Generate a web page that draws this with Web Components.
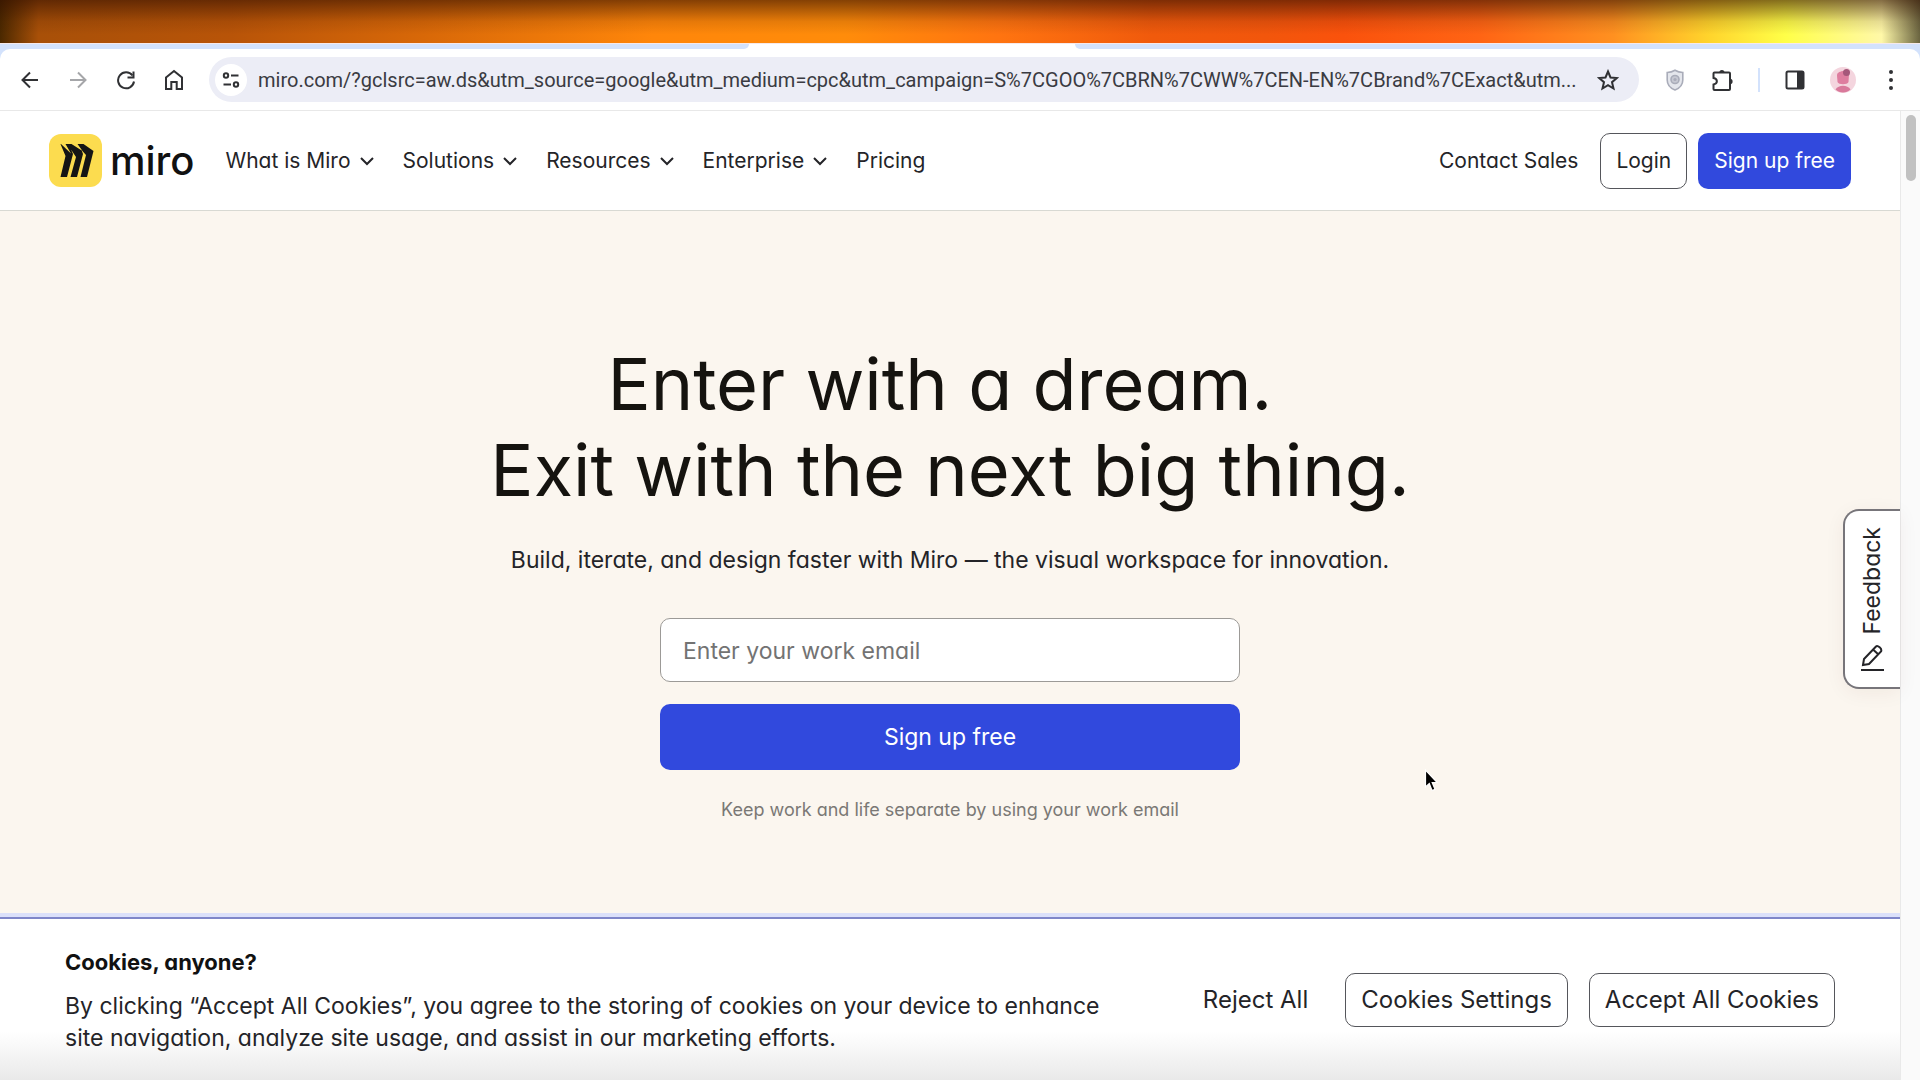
<!DOCTYPE html>
<html lang="en">
<head>
<meta charset="utf-8">
<meta name="viewport" content="width=device-width, initial-scale=1">
<title>Miro</title>
<style>
  body {
    margin: 0;
    font-family: Inter, "Liberation Sans", sans-serif;
    font-feature-settings: "cv11";
    color: #242428;
  }
</style>
</head>
<body>
<browser-window>
  <browser-toolbar slot="toolbar"></browser-toolbar>
  <site-header>
    <nav-item menu>What is Miro</nav-item>
    <nav-item menu>Solutions</nav-item>
    <nav-item menu>Resources</nav-item>
    <nav-item menu>Enterprise</nav-item>
    <nav-item>Pricing</nav-item>
    <nav-item slot="actions">Contact Sales</nav-item>
    <action-button slot="actions" kind="outline">Login</action-button>
    <action-button slot="actions" kind="primary">Sign up free</action-button>
  </site-header>
  <hero-section>
    <span slot="title">Enter with a dream.&nbsp;<br>Exit with the next big thing.</span>
    <span slot="lead">Build, iterate, and design faster with Miro — the visual workspace for innovation.</span>
    <span slot="note">Keep work and life separate by using your work email</span>
  </hero-section>
  <cookie-banner>
    <span slot="title">Cookies, anyone?</span>
    By clicking “Accept All Cookies”, you agree to the storing of cookies on your device to enhance site navigation, analyze site usage, and assist in our marketing efforts.
    <action-button slot="actions" kind="plain">Reject All</action-button>
    <action-button slot="actions" kind="outline">Cookies Settings</action-button>
    <action-button slot="actions" kind="outline">Accept All Cookies</action-button>
  </cookie-banner>
  <feedback-tab slot="overlay">Feedback</feedback-tab>
  <mouse-pointer slot="overlay"></mouse-pointer>
</browser-window>

<script>
function define(name, html, setup) {
  const template = document.createElement("template");
  template.innerHTML = html;

  customElements.define(name, class extends HTMLElement {
    constructor() {
      super();
      this.attachShadow({ mode: "open" });
      this.shadowRoot.append(template.content.cloneNode(true));
    }

    connectedCallback() {
      if (setup) setup(this, this.shadowRoot);
    }
  });
}

// window frame: wallpaper strip, tab edge, toolbar, then page + scrollbar
define("browser-window", `
<style>
  :host {
    display: flex;
    flex-direction: column;
    min-height: 100vh;
    background: #fff;
  }
  .wallpaper {
    height: 43px;
    background:
      linear-gradient(180deg, rgba(50, 15, 0, .6), rgba(50, 15, 0, .12) 50%, transparent 80%),
      linear-gradient(90deg, #4a2800 0, #a85008 2%, #b85408 12%, #d86808 22%, #ff860a 34%, #ff8c0a 44%, #ff7410 52%, #f05a0c 60%, #f2560c 66%, #fa520c 70%, #ff6414 77%, #ff9020 84%, #ffd42c 89%, #ffff48 93%, #fff8a8 98%, #6a6440 100%);
  }
  .tabs {
    display: flex;
    height: 6px;
    background: #fff;
    border-top: 1px solid #f6e9ea;
    box-sizing: border-box;
  }
  .tabs i { background: #d3e2fc; }
  .tabs i:first-child { flex: 0 0 39%; border-radius: 0 0 6px 0; }
  .tabs i:last-child { flex: 0 0 44%; margin-left: auto; border-radius: 0 0 0 6px; }
  .bar { background: #d3e2fc; }
  .body { flex: 1; display: flex; }
  main { position: relative; flex: 1; min-width: 0; display: flex; flex-direction: column; }
  aside {
    flex: 0 0 19px;
    background: #fafafa;
    border-left: 1px solid #e9e9e9;
    display: flex;
    justify-content: center;
    align-items: flex-start;
  }
  aside div { width: 10px; height: 66px; margin-top: 4px; border-radius: 5px; background: #c1c1c1; }
</style>
<div class="wallpaper"></div>
<div class="tabs"><i></i><i></i></div>
<div class="bar"><slot name="toolbar"></slot></div>
<div class="body">
  <main><slot></slot><slot name="overlay"></slot></main>
  <aside><div></div></aside>
</div>
`);

define("icon-button", `
<style>
  :host { display: inline-flex; }
  button {
    display: grid;
    place-items: center;
    width: 32px;
    height: 32px;
    padding: 0;
    border: 0;
    border-radius: 50%;
    background: none;
    color: inherit;
  }
</style>
<button type="button"><slot></slot></button>
`, (el, root) => {
  root.querySelector("button").setAttribute("aria-label", el.getAttribute("label"));
});

define("browser-toolbar", `
<style>
  :host {
    display: flex;
    align-items: center;
    height: 61px;
    padding: 0 13px 0 14px;
    border-bottom: 1px solid #e8e8e8;
    border-radius: 10px 10px 0 0;
    background: #fff;
    color: #303134;
  }
  svg { display: block; fill: none; stroke: currentColor; stroke-width: 2; }
  .nav { display: flex; gap: 16px; margin-right: 19px; }
  .off { color: #a5a6a9; }
  .omnibox {
    flex: 1;
    display: flex;
    align-items: center;
    gap: 11px;
    height: 45px;
    padding: 0 15px 0 6px;
    border-radius: 23px;
    background: #ecedf6;
  }
  .site { border-radius: 50%; background: #fff; }
  input {
    flex: 1;
    min-width: 0;
    padding: 0;
    border: 0;
    outline: 0;
    background: none;
    font: 20px Roboto, sans-serif;
    color: #3a3b42;
    text-overflow: ellipsis;
  }
  .ext { display: flex; align-items: center; gap: 16px; margin-left: 20px; }
  .sep { width: 2px; height: 24px; margin: 0 3px; background: #d3e2fc; }
</style>
<div class="nav">
  <icon-button label="Back"><svg width="18" height="18" viewBox="0 0 18 18"><path d="M17 9H2M9 1.500L1.500 9L9 16.500"/></svg></icon-button>
  <icon-button class="off" label="Forward"><svg width="18" height="18" viewBox="0 0 18 18"><path d="M1 9h15M9 1.500L16.500 9L9 16.500"/></svg></icon-button>
  <icon-button label="Reload"><svg width="20" height="20" viewBox="0 0 20 20"><path d="M16.500 5.500A8 8 0 1 0 18 11.500"/><path d="M17.500 1.500v6h-6"/></svg></icon-button>
  <icon-button label="Home"><svg width="20" height="22" viewBox="0 0 20 22"><path d="M2 8.500L10 2l8 6.500V20h-5.300v-7H7.300v7H2z"/></svg></icon-button>
</div>
<div class="omnibox">
  <icon-button class="site" label="Site information"><svg width="18" height="18" viewBox="0 0 18 18"><circle cx="4" cy="4.500" r="2.200"/><path d="M9 4.500h7.500M1.500 13.500H9"/><circle cx="14" cy="13.500" r="2.200"/></svg></icon-button>
  <input aria-label="Address" spellcheck="false" value="miro.com/?gclsrc=aw.ds&amp;utm_source=google&amp;utm_medium=cpc&amp;utm_campaign=S%7CGOO%7CBRN%7CWW%7CEN-EN%7CBrand%7CExact&amp;utm...">
  <icon-button label="Bookmark"><svg width="22" height="22" viewBox="0 0 22 22"><path d="M11 2.500l2.500 6 6.300.5-4.800 4.200 1.500 6.300L11 16.100 5.500 19.500 7 13.200 2.200 9l6.300-.5z"/></svg></icon-button>
</div>
<div class="ext">
  <icon-button label="Shield"><svg width="18" height="22" viewBox="0 0 18 22"><path d="M9 1.200c2.500 1.500 5 2.200 7.800 2.300V11c0 5-4 8.500-7.800 10C5.200 19.500 1.200 16 1.200 11V3.500C4 3.400 6.500 2.700 9 1.200z" fill="#e4e6ec" stroke="#a9acb9" stroke-width="1.600"/><circle cx="9" cy="10.500" r="4" stroke="#a9acb9" stroke-width="1.600" fill="#c6c8d2"/><circle cx="9" cy="10.500" r="1.600" fill="#a9acb9" stroke="none"/></svg></icon-button>
  <icon-button label="Extensions"><svg width="24" height="24" viewBox="0 0 24 24"><path d="M2.500 5.500a1 1 0 0 1 1-1h14.500a1 1 0 0 1 1 1V21a1 1 0 0 1-1 1H3.500a1 1 0 0 1-1-1v-4.500c4.500-1 4.500-5.500 0-6.500z"/><path d="M8.300 4.500a2.600 2.600 0 0 1 5.200 0zM19 10.800a2.600 2.600 0 0 1 0 5.200z" fill="currentColor" stroke="none"/></svg></icon-button>
  <div class="sep"></div>
  <icon-button label="Side panel"><svg width="20" height="20" viewBox="0 0 20 20"><rect x="1.500" y="1.500" width="17" height="17" rx="1.500"/><path d="M12 1.500h6.500v17H12z" fill="currentColor" stroke="none"/></svg></icon-button>
  <icon-button label="Profile"><svg width="28" height="28" viewBox="0 0 28 28" stroke="none"><circle cx="14" cy="14" r="13" fill="#f4d5de" stroke="none"/><path d="M8 9c0-4 11-6 12-1l-.5 8c-1 3-10 3-11 0z" fill="#de7d9f" stroke="none"/><circle cx="17.500" cy="6.500" r="3.500" fill="#a5577a" stroke="none"/><path d="M6.500 23.500c3-5 12-5 15 0-4 4-11 4-15 0z" fill="#d9799b" stroke="none"/></svg></icon-button>
  <icon-button label="Menu"><svg width="6" height="22" viewBox="0 0 6 22"><g fill="currentColor" stroke="none"><circle cx="3" cy="3" r="2"/><circle cx="3" cy="11" r="2"/><circle cx="3" cy="19" r="2"/></g></svg></icon-button>
</div>
`);

define("nav-item", `
<style>
  :host { display: block; }
  a {
    display: flex;
    align-items: center;
    gap: 8px;
    font-size: 21px;
    line-height: 28px;
    color: inherit;
    text-decoration: none;
    white-space: nowrap;
  }
  svg { display: none; fill: none; stroke: currentColor; stroke-width: 2; }
  :host([menu]) svg { display: block; }
</style>
<a href="#"><slot></slot><svg width="16" height="16" viewBox="0 0 16 16"><path d="M2 5l6 6 6-6"/></svg></a>
`);

define("action-button", `
<style>
  :host { display: block; }
  button {
    width: 100%;
    height: var(--button-height, 56px);
    padding: 0 15px;
    border: 1px solid transparent;
    border-radius: 10px;
    background: none;
    font: inherit;
    font-feature-settings: inherit;
    font-size: var(--button-size, 21px);
    color: inherit;
    white-space: nowrap;
  }
  :host([kind="outline"]) button { border-color: #55565b; background: #fff; }
  :host([kind="primary"]) button { background: #3149dd; color: #fff; }
</style>
<button type="button"><slot></slot></button>
`);

define("site-header", `
<style>
  :host {
    display: flex;
    align-items: center;
    justify-content: space-between;
    height: 99px;
    padding: 0 49px;
    border-bottom: 1px solid #d8d9d3;
    background: #fff;
  }
  .logo {
    display: flex;
    align-items: center;
    gap: 8px;
    margin-right: 31px;
    font-size: 40px;
    line-height: 48px;
    font-weight: 500;
    color: #111;
    text-decoration: none;
  }
  nav, .actions { display: flex; align-items: center; }
  nav { gap: 28px; }
  .actions { gap: 11px; }
  .actions ::slotted(nav-item) { margin-right: 11px; }
  .left { display: flex; align-items: center; }
</style>
<div class="left">
  <a class="logo" href="#"><svg width="53" height="53" viewBox="0 0 53 53"><rect width="53" height="53" rx="12" fill="#fcdc4f"/><path fill="#151515" d="M34.500 10h-6l5 7-11-7h-6l5.500 9.500L12 10l-.500 0 5 12-5 21h6.500L24 20l-2-4.500L27 23l-5.500 20H28l6-23-1.500-4L37 21l-5.500 22H38l6.500-26z"/></svg>miro</a>
  <nav><slot></slot></nav>
</div>
<div class="actions"><slot name="actions"></slot></div>
`);

define("hero-section", `
<style>
  :host {
    flex: 1;
    display: flex;
    flex-direction: column;
    align-items: center;
    padding: 130px 24px 90px;
    background: #fbf6ef;
    text-align: center;
  }
  h1 { margin: 0; font-size: 72px; line-height: 86px; font-weight: 400; color: #15130f; }
  p { margin: 0; }
  .lead { margin-top: 30px; font-size: 23px; line-height: 34px; }
  form { width: 580px; max-width: 100%; margin-top: 41px; --button-height: 66px; --button-size: 23px; }
  input {
    display: block;
    box-sizing: border-box;
    width: 100%;
    height: 64px;
    margin-bottom: 22px;
    padding: 2px 22px 0;
    border: 1px solid #9c9a97;
    border-radius: 10px;
    background: #fff;
    font: inherit;
    font-feature-settings: inherit;
    font-size: 23px;
  }
  input::placeholder { color: #737373; }
  .note { margin-top: 26px; font-size: 18px; line-height: 28px; color: #7a7875; }
</style>
<h1><slot name="title"></slot></h1>
<p class="lead"><slot name="lead"></slot></p>
<form>
  <input type="email" aria-label="Work email" placeholder="Enter your work email">
  <action-button kind="primary">Sign up free</action-button>
</form>
<p class="note"><slot name="note"></slot></p>
`);

define("cookie-banner", `
<style>
  :host {
    display: flex;
    align-items: center;
    justify-content: space-between;
    gap: 32px;
    height: 161px;
    padding: 0 65px;
    border-top: 2px solid #7f86c9;
    box-shadow: 0 -4px 0 #dbe0fa;
    background: linear-gradient(180deg, #fff 70%, #e9e9e9);
  }
  h2 { margin: 0 0 12px; font-size: 22px; line-height: 32px; font-weight: 700; color: #111; }
  p { margin: 0; font-size: 23px; line-height: 32px; }
  .text { max-width: 1060px; }
  .actions { display: flex; gap: 21px; --button-height: 54px; --button-size: 24px; }
</style>
<div class="text">
  <h2><slot name="title"></slot></h2>
  <p><slot></slot></p>
</div>
<div class="actions"><slot name="actions"></slot></div>
`);

define("feedback-tab", `
<style>
  :host { position: absolute; right: 0; top: 398px; }
  button {
    display: flex;
    align-items: center;
    gap: 10px;
    width: 57px;
    height: 180px;
    padding: 15px 16px 15px 14px;
    border: 2px solid #77757a;
    border-right: 0;
    border-radius: 16px 0 0 16px;
    background: #fff;
    box-shadow: 0 4px 20px rgba(80, 40, 0, .06);
    writing-mode: sideways-lr;
    font: inherit;
    font-feature-settings: inherit;
    font-size: 23px;
    color: inherit;
  }
  svg { flex: none; fill: none; stroke: currentColor; stroke-width: 2; }
</style>
<button type="button"><svg width="24" height="28" viewBox="0 0 24 28"><path d="M1 26h23M3 21l1-6L16 2.500c1.500-1.500 6.500 2 5 5L9 20z M13 5.500l5.500 5"/></svg><slot></slot></button>
`);

define("mouse-pointer", `
<style>
  :host { position: absolute; left: 1424px; top: 658px; }
  svg { display: block; }
</style>
<svg width="16" height="24" viewBox="0 0 16 24"><path d="M1.500 1v17l3.800-3.500 2.700 7 3-1.200-2.800-6.800h5z" fill="#000" stroke="#fff" stroke-width="1.200"/></svg>
`);
</script>
</body>
</html>
